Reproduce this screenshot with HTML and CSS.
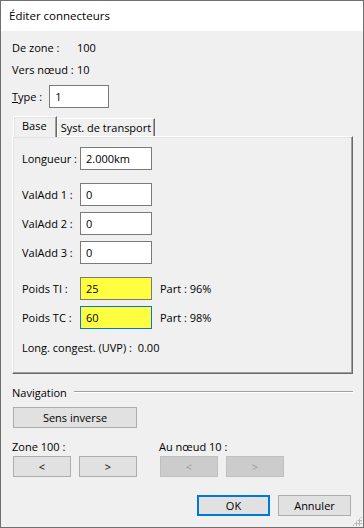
FILE: index.html
```html
<!DOCTYPE html>
<html lang="fr">

<head>
    <meta charset="UTF-8">
    <meta name="viewport" content="width=device-width, initial-scale=1.0">
    <title>Éditer connecteurs</title>
    <link rel="stylesheet" href="styles.css">
</head>

<body>
    <div class="fenetre">
        <div class="titre">Éditer connecteurs</div>

        <div class="contenu">
            <div class="info">
                <span class="info-label">De zone :</span>
                <span>100</span>
            </div>
            <div class="info">
                <span class="info-label">Vers nœud :</span>
                <span>10</span>
            </div>

            <div class="ligne-type">
                <label for="type"><u>T</u>ype :</label>
                <input type="text" id="type" class="champ champ-type" value="1">
            </div>

            <div class="onglets">
                <div class="onglet actif">Base</div>
                <div class="onglet">Syst. de transport</div>
            </div>

            <div class="panneau">
                <div class="champ-ligne">
                    <label for="longueur">Longueur :</label>
                    <input type="text" id="longueur" class="champ" value="2.000km">
                </div>

                <div class="groupe">
                    <div class="champ-ligne">
                        <label for="val1">ValAdd 1 :</label>
                        <input type="text" id="val1" class="champ" value="0">
                    </div>
                    <div class="champ-ligne">
                        <label for="val2">ValAdd 2 :</label>
                        <input type="text" id="val2" class="champ" value="0">
                    </div>
                    <div class="champ-ligne">
                        <label for="val3">ValAdd 3 :</label>
                        <input type="text" id="val3" class="champ" value="0">
                    </div>
                </div>

                <div class="groupe">
                    <div class="champ-ligne">
                        <label for="poids_ti">Poids TI :</label>
                        <input type="text" id="poids_ti" class="champ jaune" value="25">
                        <span class="part">Part : 96%</span>
                    </div>
                    <div class="champ-ligne">
                        <label for="poids_tc">Poids TC :</label>
                        <input type="text" id="poids_tc" class="champ jaune focus" value="60">
                        <span class="part">Part : 98%</span>
                    </div>
                </div>

                <div class="congestion">Long. congest. (UVP) :&nbsp; 0.00</div>
            </div>

            <div class="navigation">
                <span>Navigation</span>
                <div class="trait"></div>
            </div>

            <button class="bouton bouton-large">Sens inverse</button>

            <div class="nav-colonnes">
                <div class="nav-colonne">
                    <div class="nav-titre">Zone 100 :</div>
                    <div class="nav-boutons">
                        <button class="bouton">&lt;</button>
                        <button class="bouton">&gt;</button>
                    </div>
                </div>
                <div class="nav-colonne">
                    <div class="nav-titre">Au nœud 10 :</div>
                    <div class="nav-boutons">
                        <button class="bouton" disabled>&lt;</button>
                        <button class="bouton" disabled>&gt;</button>
                    </div>
                </div>
            </div>

            <div class="pied">
                <button class="bouton defaut">OK</button>
                <button class="bouton">Annuler</button>
            </div>
        </div>

        <div class="poignee"></div>
    </div>
</body>

</html>
```

FILE: styles.css
```css
body {
    margin: 0;
    padding: 0;
    font-family: "Open Sans", "Liberation Sans", sans-serif;
    font-size: 11px;
    color: #000000;
}

.fenetre {
    position: relative;
    width: 362px;
    height: 526px;
    border: 1px solid #707070;
    background-color: #f0f0f0;
}

.titre {
    height: 30px;
    line-height: 30px;
    padding-left: 8px;
    background-color: #ffffff;
    font-size: 11.5px;
}

.contenu {
    padding: 7px 11px 0 11px;
}

.info {
    display: flex;
    height: 22px;
    line-height: 20px;
}

.info-label {
    flex-shrink: 0;
    width: 65px;
    white-space: nowrap;
}

.ligne-type {
    display: flex;
    align-items: center;
    gap: 7px;
    margin-top: 3px;
}

.champ {
    width: 72px;
    height: 23px;
    padding: 0 5px;
    border: 1px solid #7a7a7a;
    background-color: #ffffff;
    box-sizing: border-box;
    font-family: inherit;
    font-size: 11px;
    outline: none;
}

.champ-type {
    width: 60px;
}

.jaune {
    background-color: #ffff40;
}

.focus {
    border-color: #0078d7;
}

.onglets {
    display: flex;
    align-items: flex-end;
    margin-top: 8px;
    margin-left: 1px;
    height: 20px;
}

.onglet {
    height: 17px;
    line-height: 17px;
    padding: 0 3px;
    border-top: 1px solid #ffffff;
    border-left: 1px solid #ffffff;
    border-right: 1px solid #696969;
    box-shadow: inset -1px 0 0 #a0a0a0;
}

.onglet.actif {
    height: 20px;
    line-height: 18px;
    padding: 0 9px 0 8px;
    position: relative;
    top: 1px;
    background-color: #f0f0f0;
    box-shadow: inset -1px 0 0 #a0a0a0, inset 1px 1px 0 #e3e3e3;
    z-index: 1;
}

.panneau {
    width: 341px;
    height: 238px;
    box-sizing: border-box;
    padding: 10px 9px 0 9px;
    border-top: 1px solid #ffffff;
    border-left: 1px solid #ffffff;
    border-right: 1px solid #696969;
    border-bottom: 1px solid #696969;
    box-shadow: inset -1px -1px 0 #a0a0a0, inset 1px 1px 0 #e3e3e3;
}

.champ-ligne {
    display: flex;
    align-items: center;
    height: 23px;
}

.champ-ligne label {
    flex-shrink: 0;
    width: 58px;
}

.groupe {
    display: flex;
    flex-direction: column;
    gap: 6px;
    margin-top: 13px;
}

.part {
    margin-left: 8px;
}

.congestion {
    margin-top: 11px;
    line-height: 16px;
}

.navigation {
    display: flex;
    align-items: center;
    gap: 7px;
    margin-top: 9px;
    height: 18px;
}

.trait {
    flex: 1;
    border-top: 1px solid #a0a0a0;
    border-bottom: 1px solid #ffffff;
    margin-right: -1px;
}

.bouton {
    width: 58px;
    height: 21px;
    padding: 0;
    border: 1px solid #adadad;
    background-color: #e1e1e1;
    font-family: inherit;
    font-size: 11px;
    color: #000000;
}

.bouton:disabled {
    background-color: #cccccc;
    border-color: #bfbfbf;
    color: #9a9a9a;
}

.bouton-large {
    display: block;
    width: 124px;
    margin: 6px 0 0 1px;
}

.nav-colonnes {
    display: flex;
    gap: 22px;
    margin-top: 9px;
}

.nav-titre {
    height: 19px;
    line-height: 19px;
}

.nav-boutons {
    display: flex;
    gap: 8px;
    margin-left: 1px;
}

.pied {
    display: flex;
    justify-content: flex-end;
    gap: 8px;
    margin-top: 18px;
    margin-right: 1px;
}

.pied .bouton {
    width: 73px;
    height: 21px;
}

.defaut {
    border: 2px solid #0078d7;
}

.poignee {
    position: absolute;
    right: 1px;
    bottom: 1px;
    width: 10px;
    height: 10px;
    background-image: radial-gradient(circle, #b8b8b8 1px, transparent 1.2px);
    background-size: 3px 3px;
    clip-path: polygon(100% 0, 100% 100%, 0 100%);
}
```
